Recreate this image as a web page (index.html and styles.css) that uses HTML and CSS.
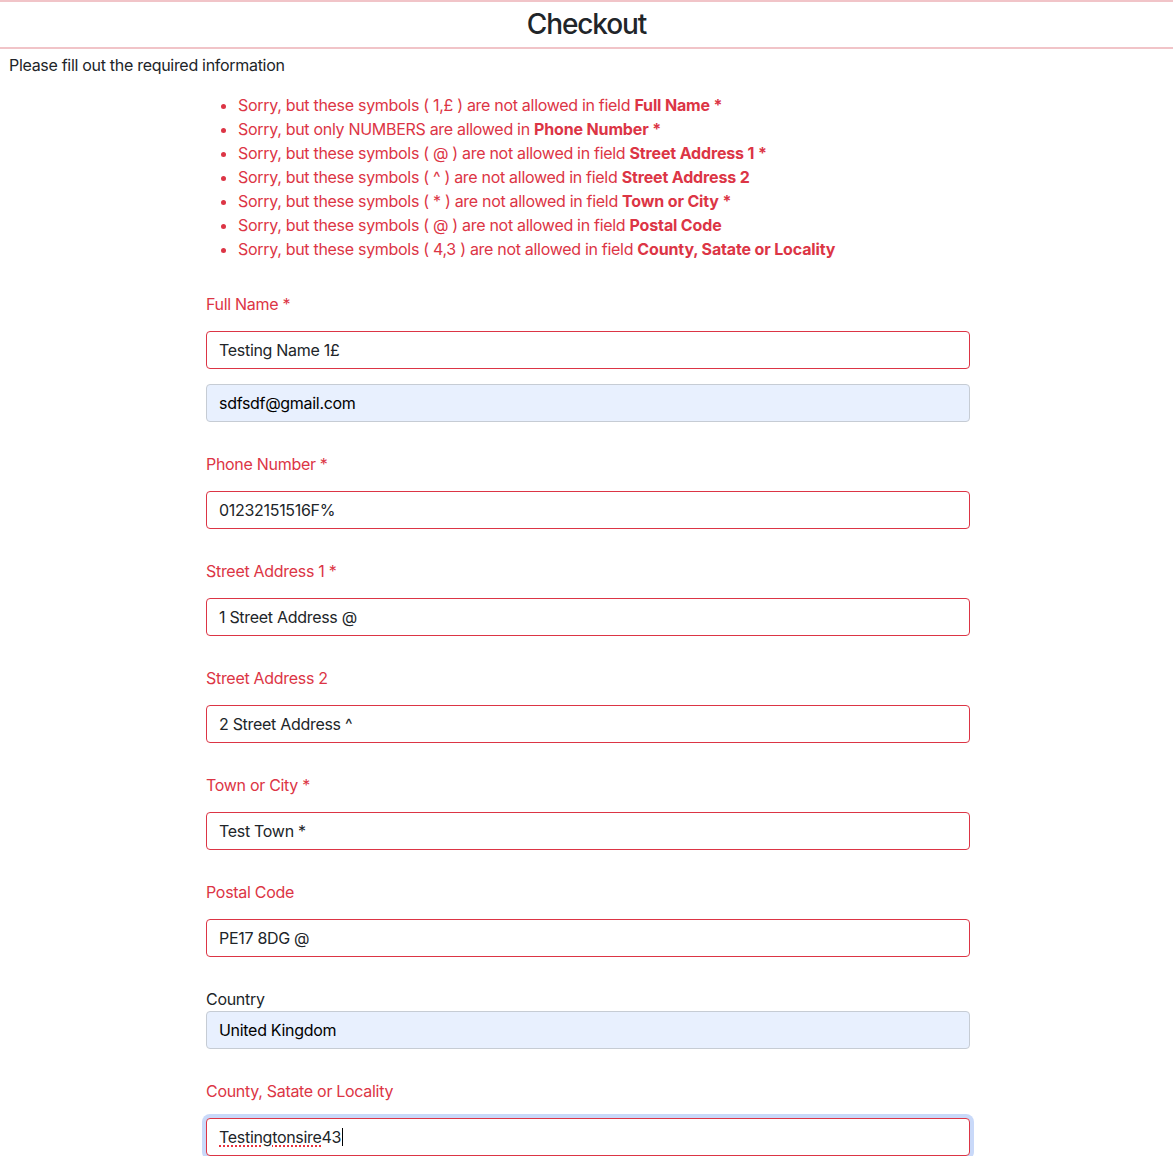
FILE: index.html
```html
<!DOCTYPE html>
<html lang="en">
<head>
<meta charset="utf-8">
<title>Checkout</title>
<link rel="stylesheet" href="styles.css">
</head>
<body>
<header class="page-header">
  <h1 class="page-title">Checkout</h1>
</header>
<p class="intro">Please fill out the required information</p>
<main class="checkout">
  <ul class="errors">
    <li>Sorry, but these symbols ( 1,£ ) are not allowed in field <strong>Full Name *</strong></li>
    <li>Sorry, but only NUMBERS are allowed in <strong>Phone Number *</strong></li>
    <li>Sorry, but these symbols ( @ ) are not allowed in field <strong>Street Address 1 *</strong></li>
    <li>Sorry, but these symbols ( ^ ) are not allowed in field <strong>Street Address 2</strong></li>
    <li>Sorry, but these symbols ( * ) are not allowed in field <strong>Town or City *</strong></li>
    <li>Sorry, but these symbols ( @ ) are not allowed in field <strong>Postal Code</strong></li>
    <li>Sorry, but these symbols ( 4,3 ) are not allowed in field <strong>County, Satate or Locality</strong></li>
  </ul>
  <form class="form">
    <div class="field">
      <label class="label invalid">Full Name *</label>
      <input class="input is-invalid" type="text" value="Testing Name 1£">
      <input class="input autofill" type="text" value="sdfsdf@gmail.com">
    </div>
    <div class="field">
      <label class="label invalid">Phone Number *</label>
      <input class="input is-invalid" type="text" value="01232151516F%">
    </div>
    <div class="field">
      <label class="label invalid">Street Address 1 *</label>
      <input class="input is-invalid" type="text" value="1 Street Address @">
    </div>
    <div class="field">
      <label class="label invalid">Street Address 2</label>
      <input class="input is-invalid" type="text" value="2 Street Address ^">
    </div>
    <div class="field">
      <label class="label invalid">Town or City *</label>
      <input class="input is-invalid" type="text" value="Test Town *">
    </div>
    <div class="field">
      <label class="label invalid">Postal Code</label>
      <input class="input is-invalid" type="text" value="PE17 8DG @">
    </div>
    <div class="field field-tight">
      <label class="label">Country</label>
      <input class="input autofill" type="text" value="United Kingdom">
    </div>
    <div class="field">
      <label class="label invalid">County, Satate or Locality</label>
      <div class="input is-invalid focused"><span class="misspelt">Testingtonsire</span>43<span class="caret"></span></div>
    </div>
  </form>
</main>
</body>
</html>
```

FILE: styles.css
```css
* { box-sizing: border-box; }

html, body {
  margin: 0;
  padding: 0;
  background: #fff;
}

body {
  font-family: Inter, "Noto Sans", sans-serif;
  font-size: 16px;
  line-height: 24px;
  letter-spacing: -0.3px;
  color: #212529;
}

.page-header {
  border-top: 2px solid #f1c4c8;
  border-bottom: 2px solid #f1c4c8;
  padding: 6px 0;
  text-align: center;
}

.page-title {
  margin: 0;
  font-size: 28px;
  line-height: 33px;
  font-weight: 500;
  letter-spacing: -1.1px;
  color: #212529;
}

.intro {
  margin: 4px 0 16px;
  padding-left: 9px;
}

.checkout {
  width: 764px;
  margin-left: 206px;
}

.errors {
  margin: 0 0 31px;
  padding-left: 32px;
  color: #dc3545;
}

.errors strong {
  font-weight: 700;
  letter-spacing: -0.15px;
}

.form {
  display: flex;
  flex-direction: column;
  gap: 30px;
}

.field {
  display: flex;
  flex-direction: column;
  gap: 15px;
}

.field-tight {
  gap: 0;
}

.label {
  display: block;
  line-height: 24px;
  color: #212529;
}

.label.invalid {
  color: #dc3545;
}

.input {
  display: block;
  width: 100%;
  height: 38px;
  margin: 0;
  padding: 6px 12px;
  font: inherit;
  letter-spacing: inherit;
  line-height: 24px;
  color: #212529;
  background: #fff;
  border: 1px solid #ced4da;
  border-radius: 4px;
  outline: none;
}

.input.is-invalid {
  border-color: #dc3545;
}

.input.autofill {
  background: #e8f0fe;
  border-color: #c6ccd4;
  color: #000;
}

.input.focused {
  box-shadow: 0 0 0 4px #c9d9f9;
}

.misspelt {
  text-decoration: underline dotted #e8313d;
  text-underline-offset: 2px;
  text-decoration-thickness: 2px;
}

.caret {
  display: inline-block;
  width: 1px;
  height: 18px;
  margin-left: 1px;
  background: #000;
  vertical-align: -3px;
}
```
